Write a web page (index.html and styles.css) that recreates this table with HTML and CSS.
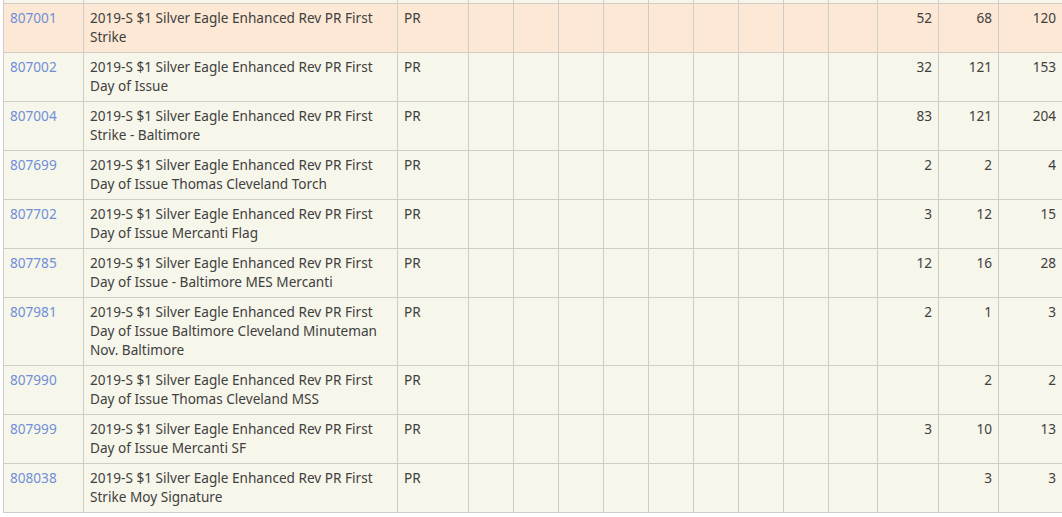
FILE: index.html
```html
<!DOCTYPE html>
<html>
<head>
<meta charset="utf-8">
<link rel="stylesheet" href="styles.css">
</head>
<body>
<div class="wrap">
<table class="grid">
<colgroup>
<col class="c-id"><col class="c-desc"><col class="c-grade">
<col class="c-e"><col class="c-e"><col class="c-e"><col class="c-e"><col class="c-e"><col class="c-e"><col class="c-e"><col class="c-e">
<col class="c-n1"><col class="c-n2"><col class="c-n3"><col class="c-n4">
</colgroup>
<tbody>
<tr class="cut"><td></td><td></td><td></td><td></td><td></td><td></td><td></td><td></td><td></td><td></td><td></td><td></td><td></td><td></td><td></td></tr>
<tr class="hl"><td><a href="#">807001</a></td><td>2019-S $1 Silver Eagle Enhanced Rev PR First Strike</td><td>PR</td><td></td><td></td><td></td><td></td><td></td><td></td><td></td><td></td><td></td><td class="num">52</td><td class="num">68</td><td class="num">120</td></tr>
<tr><td><a href="#">807002</a></td><td>2019-S $1 Silver Eagle Enhanced Rev PR First Day of Issue</td><td>PR</td><td></td><td></td><td></td><td></td><td></td><td></td><td></td><td></td><td></td><td class="num">32</td><td class="num">121</td><td class="num">153</td></tr>
<tr><td><a href="#">807004</a></td><td>2019-S $1 Silver Eagle Enhanced Rev PR First Strike - Baltimore</td><td>PR</td><td></td><td></td><td></td><td></td><td></td><td></td><td></td><td></td><td></td><td class="num">83</td><td class="num">121</td><td class="num">204</td></tr>
<tr><td><a href="#">807699</a></td><td>2019-S $1 Silver Eagle Enhanced Rev PR First Day of Issue Thomas Cleveland Torch</td><td>PR</td><td></td><td></td><td></td><td></td><td></td><td></td><td></td><td></td><td></td><td class="num">2</td><td class="num">2</td><td class="num">4</td></tr>
<tr><td><a href="#">807702</a></td><td>2019-S $1 Silver Eagle Enhanced Rev PR First Day of Issue Mercanti Flag</td><td>PR</td><td></td><td></td><td></td><td></td><td></td><td></td><td></td><td></td><td></td><td class="num">3</td><td class="num">12</td><td class="num">15</td></tr>
<tr><td><a href="#">807785</a></td><td>2019-S $1 Silver Eagle Enhanced Rev PR First Day of Issue - Baltimore MES Mercanti</td><td>PR</td><td></td><td></td><td></td><td></td><td></td><td></td><td></td><td></td><td></td><td class="num">12</td><td class="num">16</td><td class="num">28</td></tr>
<tr><td><a href="#">807981</a></td><td>2019-S $1 Silver Eagle Enhanced Rev PR First Day of Issue Baltimore Cleveland Minuteman Nov. Baltimore</td><td>PR</td><td></td><td></td><td></td><td></td><td></td><td></td><td></td><td></td><td></td><td class="num">2</td><td class="num">1</td><td class="num">3</td></tr>
<tr><td><a href="#">807990</a></td><td>2019-S $1 Silver Eagle Enhanced Rev PR First Day of Issue Thomas Cleveland MSS</td><td>PR</td><td></td><td></td><td></td><td></td><td></td><td></td><td></td><td></td><td></td><td class="num"></td><td class="num">2</td><td class="num">2</td></tr>
<tr><td><a href="#">807999</a></td><td>2019-S $1 Silver Eagle Enhanced Rev PR First Day of Issue Mercanti SF</td><td>PR</td><td></td><td></td><td></td><td></td><td></td><td></td><td></td><td></td><td></td><td class="num">3</td><td class="num">10</td><td class="num">13</td></tr>
<tr><td><a href="#">808038</a></td><td>2019-S $1 Silver Eagle Enhanced Rev PR First Strike Moy Signature</td><td>PR</td><td></td><td></td><td></td><td></td><td></td><td></td><td></td><td></td><td></td><td class="num"></td><td class="num">3</td><td class="num">3</td></tr>
</tbody>
</table>
</div>
</body>
</html>
```
FILE: styles.css
```css
html, body {
  margin: 0;
  padding: 0;
  background: #ffffff;
  overflow: hidden;
}
.wrap {
  padding-left: 3px;
}
.grid {
  border-collapse: collapse;
  table-layout: fixed;
  width: 1059px;
  font-family: "Noto Sans", "Open Sans", sans-serif;
  font-size: 13.6px;
  line-height: 19px;
  color: #404040;
  background: #f7f6ea;
}
.c-id { width: 80px; }
.c-desc { width: 314px; }
.c-grade { width: 71px; }
.c-e { width: 45px; }
.c-n1 { width: 49px; }
.c-n2 { width: 61px; }
.c-n3 { width: 60px; }
.c-n4 { width: 64px; }
.grid td {
  border: 1px solid #cfcdc6;
  padding: 4px 6px 6px;
  vertical-align: top;
  text-align: left;
}
.grid tr.cut td {
  border-top: none;
  padding: 0;
  height: 3px;
  line-height: 0;
  font-size: 0;
}
.grid tr.hl td {
  background: #fce8d4;
}
.grid td.num {
  text-align: right;
  padding-right: 6px;
}
.grid a {
  color: #6f8fd8;
  text-decoration: none;
}
```
